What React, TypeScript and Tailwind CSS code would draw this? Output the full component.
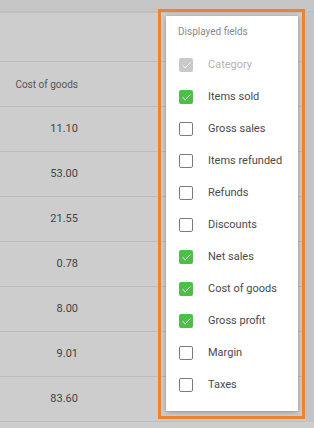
import { Check } from "lucide-react";

const values = ["11.10", "53.00", "21.55", "0.78", "8.00", "9.01", "83.60"];

const fields = [
  { label: "Category", checked: true, disabled: true },
  { label: "Items sold", checked: true },
  { label: "Gross sales", checked: false },
  { label: "Items refunded", checked: false },
  { label: "Refunds", checked: false },
  { label: "Discounts", checked: false },
  { label: "Net sales", checked: true },
  { label: "Cost of goods", checked: true },
  { label: "Gross profit", checked: true },
  { label: "Margin", checked: false },
  { label: "Taxes", checked: false },
];

type Field = { label: string; checked: boolean; disabled?: boolean };

const FieldRow = ({ label, checked, disabled }: Field) => {
  let box = "border-[1.5px] border-[#7a7a7a] bg-white";
  if (checked) box = disabled ? "bg-[#c9c9c9]" : "bg-[#4cbe4a]";
  return (
    <div className="flex h-[32px] items-center pl-[13px]">
      <div className={`flex h-[14px] w-[14px] items-center justify-center rounded-[2px] ${box}`}>
        {checked && <Check size={11} strokeWidth={2} className="text-white" />}
      </div>
      <span
        className={`ml-[15px] text-[11px] ${disabled ? "text-[#b4b4b4]" : "text-[#4a4a4a]"}`}
      >
        {label}
      </span>
    </div>
  );
};

export default function App() {
  return (
    <div
      className="relative h-[428px] w-[314px] overflow-hidden bg-[#cdcdcd]"
      style={{ fontFamily: "Roboto, 'Noto Sans', sans-serif" }}
    >
      <div className="h-[13px] border-b-2 border-[#c0c0c0] bg-[#c6c6c6]" />
      <div className="flex">
        <div className="flex-1">
          <div className="h-[49px] border-b border-[#bcbcbc]" />
          <div className="flex h-[45px] items-center border-b border-[#bcbcbc]">
            <span className="w-[78px] text-right text-[10px] text-[#555]">Cost of goods</span>
          </div>
          {values.map((v) => (
            <div key={v} className="flex h-[45px] items-center border-b border-[#bcbcbc]">
              <span className="w-[78px] text-right text-[11px] text-[#444]">{v}</span>
            </div>
          ))}
        </div>
        <div className="w-[9px] self-stretch bg-[#c4c4c4]" />
      </div>

      <div className="absolute left-[158px] top-[9px] h-[410px] w-[147px] border-[3px] border-[#f0812e] pb-[5px] pl-[5px] pr-[4px] pt-[4px]">
        <div className="h-full bg-white pb-[9px] pt-[10px] shadow-[0_1px_5px_rgba(0,0,0,0.3)]">
          <div className="mb-[11px] pl-[12px] text-[10px] leading-[12px] text-[#8a8a8a]">
            Displayed fields
          </div>
          {fields.map((f) => (
            <FieldRow key={f.label} {...f} />
          ))}
        </div>
      </div>
    </div>
  );
}
